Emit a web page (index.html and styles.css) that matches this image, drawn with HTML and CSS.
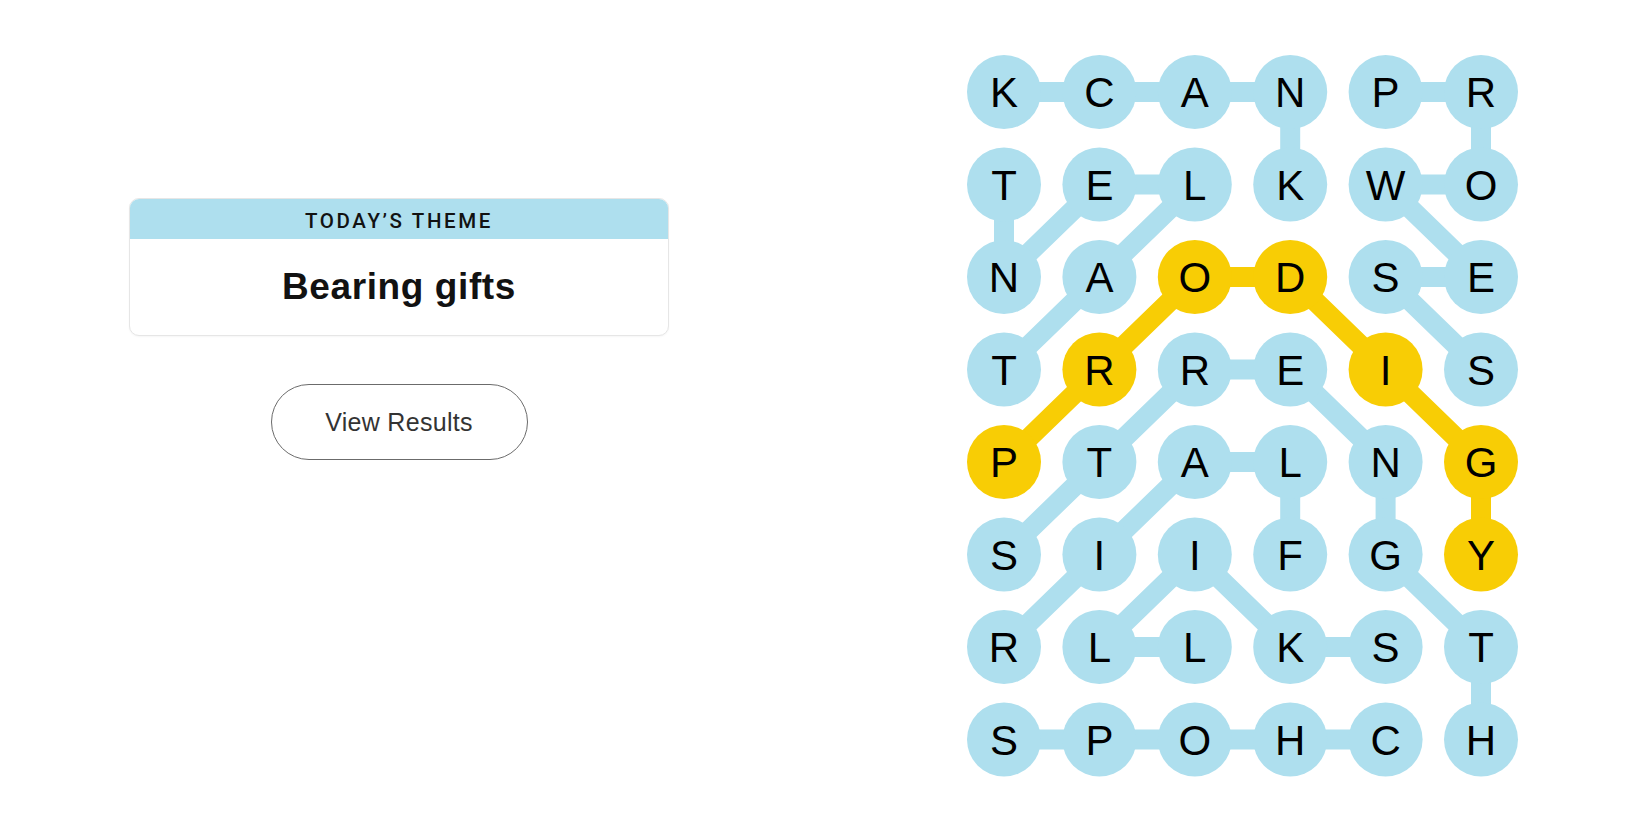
FILE: index.html
```html
<!DOCTYPE html>
<html lang="en">
<head>
<meta charset="utf-8">
<title>Strands</title>
<link rel="stylesheet" href="styles.css">
</head>
<body>
<main class="page">
  <section class="left">
    <div class="theme-card">
      <div class="theme-head">TODAY’S THEME</div>
      <div class="theme-body">Bearing gifts</div>
    </div>
    <button class="results-btn" type="button">View Results</button>
  </section>
  <section class="board">
    <svg class="board-svg" width="552" height="722" viewBox="0 0 552 722" xmlns="http://www.w3.org/2000/svg">
      <g class="links">
        <polyline points="323.2,129.5 323.2,37 37,37"/>
        <polyline points="418.6,37 514,37 514,129.5 418.6,129.5 514,222 418.6,222 514,314.5"/>
        <polyline points="37,314.5 132.4,222 227.8,129.5 132.4,129.5 37,222 37,129.5"/>
        <polyline points="37,499.5 132.4,407 227.8,314.5 323.2,314.5 418.6,407 418.6,499.5 514,592 514,684.5"/>
        <polyline points="323.2,499.5 323.2,407 227.8,407 132.4,499.5 37,592"/>
        <polyline points="418.6,592 323.2,592 227.8,499.5 132.4,592 227.8,592"/>
        <polyline points="418.6,684.5 37,684.5"/>
      </g>
      <g class="links spangram">
        <polyline points="37,407 132.4,314.5 227.8,222 323.2,222 418.6,314.5 514,407 514,499.5"/>
      </g>
      <g class="cells">
        <circle cx="37" cy="37" r="37"/><circle cx="132.4" cy="37" r="37"/><circle cx="227.8" cy="37" r="37"/><circle cx="323.2" cy="37" r="37"/><circle cx="418.6" cy="37" r="37"/><circle cx="514" cy="37" r="37"/>
        <circle cx="37" cy="129.5" r="37"/><circle cx="132.4" cy="129.5" r="37"/><circle cx="227.8" cy="129.5" r="37"/><circle cx="323.2" cy="129.5" r="37"/><circle cx="418.6" cy="129.5" r="37"/><circle cx="514" cy="129.5" r="37"/>
        <circle cx="37" cy="222" r="37"/><circle cx="132.4" cy="222" r="37"/><circle class="gold" cx="227.8" cy="222" r="37"/><circle class="gold" cx="323.2" cy="222" r="37"/><circle cx="418.6" cy="222" r="37"/><circle cx="514" cy="222" r="37"/>
        <circle cx="37" cy="314.5" r="37"/><circle class="gold" cx="132.4" cy="314.5" r="37"/><circle cx="227.8" cy="314.5" r="37"/><circle cx="323.2" cy="314.5" r="37"/><circle class="gold" cx="418.6" cy="314.5" r="37"/><circle cx="514" cy="314.5" r="37"/>
        <circle class="gold" cx="37" cy="407" r="37"/><circle cx="132.4" cy="407" r="37"/><circle cx="227.8" cy="407" r="37"/><circle cx="323.2" cy="407" r="37"/><circle cx="418.6" cy="407" r="37"/><circle class="gold" cx="514" cy="407" r="37"/>
        <circle cx="37" cy="499.5" r="37"/><circle cx="132.4" cy="499.5" r="37"/><circle cx="227.8" cy="499.5" r="37"/><circle cx="323.2" cy="499.5" r="37"/><circle cx="418.6" cy="499.5" r="37"/><circle class="gold" cx="514" cy="499.5" r="37"/>
        <circle cx="37" cy="592" r="37"/><circle cx="132.4" cy="592" r="37"/><circle cx="227.8" cy="592" r="37"/><circle cx="323.2" cy="592" r="37"/><circle cx="418.6" cy="592" r="37"/><circle cx="514" cy="592" r="37"/>
        <circle cx="37" cy="684.5" r="37"/><circle cx="132.4" cy="684.5" r="37"/><circle cx="227.8" cy="684.5" r="37"/><circle cx="323.2" cy="684.5" r="37"/><circle cx="418.6" cy="684.5" r="37"/><circle cx="514" cy="684.5" r="37"/>
      </g>
      <g class="letters" text-anchor="middle">
        <text x="37" y="52">K</text><text x="132.4" y="52">C</text><text x="227.8" y="52">A</text><text x="323.2" y="52">N</text><text x="418.6" y="52">P</text><text x="514" y="52">R</text>
        <text x="37" y="144.5">T</text><text x="132.4" y="144.5">E</text><text x="227.8" y="144.5">L</text><text x="323.2" y="144.5">K</text><text x="418.6" y="144.5">W</text><text x="514" y="144.5">O</text>
        <text x="37" y="237">N</text><text x="132.4" y="237">A</text><text x="227.8" y="237">O</text><text x="323.2" y="237">D</text><text x="418.6" y="237">S</text><text x="514" y="237">E</text>
        <text x="37" y="329.5">T</text><text x="132.4" y="329.5">R</text><text x="227.8" y="329.5">R</text><text x="323.2" y="329.5">E</text><text x="418.6" y="329.5">I</text><text x="514" y="329.5">S</text>
        <text x="37" y="422">P</text><text x="132.4" y="422">T</text><text x="227.8" y="422">A</text><text x="323.2" y="422">L</text><text x="418.6" y="422">N</text><text x="514" y="422">G</text>
        <text x="37" y="514.5">S</text><text x="132.4" y="514.5">I</text><text x="227.8" y="514.5">I</text><text x="323.2" y="514.5">F</text><text x="418.6" y="514.5">G</text><text x="514" y="514.5">Y</text>
        <text x="37" y="607">R</text><text x="132.4" y="607">L</text><text x="227.8" y="607">L</text><text x="323.2" y="607">K</text><text x="418.6" y="607">S</text><text x="514" y="607">T</text>
        <text x="37" y="699.5">S</text><text x="132.4" y="699.5">P</text><text x="227.8" y="699.5">O</text><text x="323.2" y="699.5">H</text><text x="418.6" y="699.5">C</text><text x="514" y="699.5">H</text>
      </g>
    </svg>
  </section>
</main>
</body>
</html>
```

FILE: styles.css
```css
* {
  box-sizing: border-box;
}

html, body {
  margin: 0;
  padding: 0;
  background: #ffffff;
}

body {
  font-family: "Liberation Sans", Arial, sans-serif;
  color: #121212;
}

.page {
  display: flex;
  align-items: flex-start;
  padding: 55px 0 0 129px;
  height: 825px;
  overflow: hidden;
}

.left {
  width: 540px;
  margin-top: 143px;
  display: flex;
  flex-direction: column;
  align-items: center;
}

.theme-card {
  width: 540px;
  height: 138px;
  border: 1px solid #e6e6e6;
  border-radius: 10px;
  overflow: hidden;
  display: flex;
  flex-direction: column;
  background: #ffffff;
  box-shadow: 0 1px 2px rgba(0, 0, 0, 0.04);
}

.theme-head {
  height: 40px;
  background: #aedfee;
  display: flex;
  align-items: center;
  justify-content: center;
  font-family: Roboto, "Liberation Sans", sans-serif;
  font-weight: 500;
  font-size: 20.5px;
  letter-spacing: 2.6px;
  color: #121212;
  padding-top: 3px;
}

.theme-body {
  flex: 1;
  display: flex;
  align-items: center;
  justify-content: center;
  font-weight: 700;
  font-size: 37px;
  letter-spacing: 0.6px;
  color: #121212;
}

.results-btn {
  margin-top: 48px;
  width: 257px;
  height: 76px;
  border: 1px solid #6b6b6b;
  border-radius: 38px;
  background: #ffffff;
  font-family: "Liberation Sans", Arial, sans-serif;
  font-size: 25px;
  letter-spacing: 0.3px;
  color: #333333;
  padding: 0;
}

.board {
  margin-left: 298px;
}

.board-svg {
  display: block;
}

.links polyline {
  fill: none;
  stroke: #aedfee;
  stroke-width: 20;
  stroke-linejoin: round;
}

.links.spangram polyline {
  stroke: #f8cd05;
}

.cells circle {
  fill: #aedfee;
}

.cells circle.gold {
  fill: #f8cd05;
}

.letters text {
  font-family: "Liberation Sans", Arial, sans-serif;
  font-size: 42px;
  fill: #000000;
}
```
